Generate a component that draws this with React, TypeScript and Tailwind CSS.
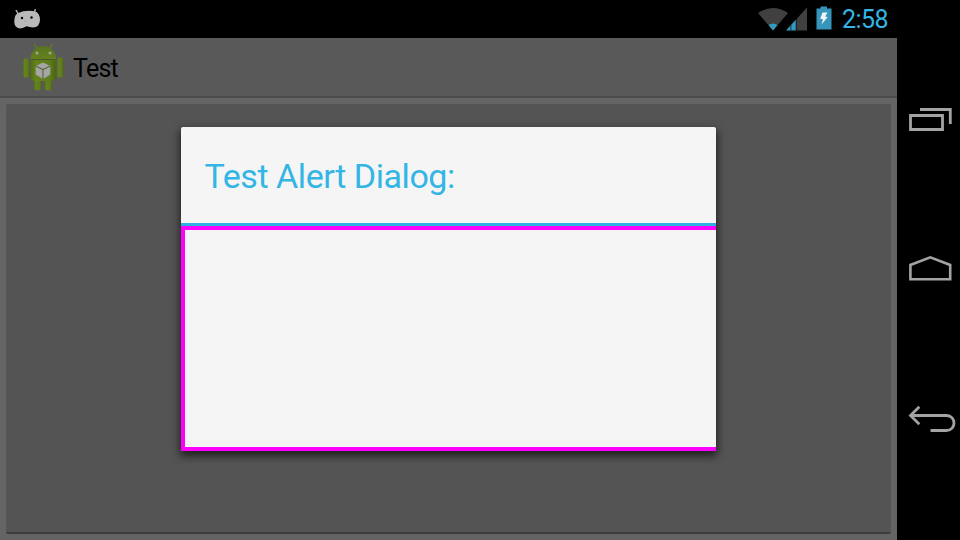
function AndroidHead() {
  return (
    <svg width="28" height="20" viewBox="0 0 28 20" fill="#b9b9b9">
      <path d="M2 1 L4.500 5.500" stroke="#b9b9b9" strokeWidth="1.400" />
      <path d="M21.500 0 L20 4" stroke="#b9b9b9" strokeWidth="1.400" />
      <path d="M3.500 4.200 Q12 0.500 21.500 2.500 Q26 4.500 26 11 Q25.500 18.500 19 18.500 Q15.500 18.300 12.500 17.300 Q8 20.300 4 19 Q0 17.500 0.300 12 Q0.500 6 3.500 4.200Z" />
      <circle cx="8" cy="9" r="1.200" fill="#000" />
      <circle cx="17.500" cy="8.500" r="1.200" fill="#000" />
      <circle cx="11.500" cy="12.500" r="0.500" fill="#888" />
    </svg>
  );
}

function AppIcon() {
  return (
    <svg width="41" height="48" viewBox="0 0 41 48">
      <defs>
        <linearGradient id="head" x1="0" y1="0" x2="0" y2="1">
          <stop offset="0" stopColor="#57731f" />
          <stop offset="1" stopColor="#64821d" />
        </linearGradient>
        <linearGradient id="body" x1="0" y1="0" x2="1" y2="0">
          <stop offset="0" stopColor="#506c14" />
          <stop offset="0.200" stopColor="#64831d" />
          <stop offset="0.750" stopColor="#5f7d1c" />
          <stop offset="1" stopColor="#4b6512" />
        </linearGradient>
      </defs>
      <path d="M11 0.800 L14 5.500 M29.500 0.800 L26.500 5.500" stroke="#5f7d20" strokeWidth="1.400" />
      <path d="M7.500 16 C8 -1.500 32.500 -1.500 33 16Z" fill="url(#head)" />
      <circle cx="14" cy="10" r="1.500" fill="#a0a690" />
      <circle cx="27" cy="10" r="1.500" fill="#a0a690" />
      <rect x="0" y="15.500" width="6.300" height="19" rx="2" fill="url(#body)" />
      <rect x="34" y="14.500" width="6.300" height="20" rx="2" fill="url(#body)" />
      <rect x="11" y="34" width="7.500" height="13.300" rx="2.500" fill="url(#body)" />
      <rect x="21.500" y="34" width="7.500" height="13.300" rx="2.500" fill="url(#body)" />
      <path d="M7.500 17H33V34Q33 38 29 38H11.500Q7.500 38 7.500 34Z" fill="url(#body)" />
      <path d="M9 16.500H31.500" stroke="#475b17" strokeWidth="0.800" />
      <path d="M20 19.500 L27.300 23 V31.500 L20 36 L12.700 31.500 V23Z" fill="#a6a6a6" />
      <path d="M12.700 23 L20 26.600 L27.300 23 M20 26.600V36" stroke="#5a6a3a" strokeWidth="1.200" fill="none" />
    </svg>
  );
}

function Wifi() {
  return (
    <svg width="30" height="24" viewBox="0 0 30 24">
      <path d="M0 6 Q15 -4 30 6 L15 23.500Z" fill="#404040" />
      <path d="M10.500 18 Q15 15 19.500 18 L15 23.500Z" fill="#339abf" />
    </svg>
  );
}

function Signal() {
  return (
    <svg width="22" height="24" viewBox="0 0 22 24">
      <path d="M10.500 12 L21 0.500V23.500H10.500Z" fill="#404040" />
      <path d="M0 23.500 L4.500 18.500V23.500Z M5.200 17.800 L9.800 12.800V23.500H5.200Z" fill="#339abf" />
      <path d="M4.800 18V23.500" stroke="#245f76" />
    </svg>
  );
}

function Battery() {
  return (
    <svg width="16" height="24" viewBox="0 0 16 24">
      <path d="M4.500 0.500H11V2.500H15.500V23.500H0.500V2.500H4.500Z" fill="#3795bb" />
      <path d="M6.500 6.500 L11.500 6.500 L9.200 10.500 L11.700 11 L5.500 18.500 L6.900 13.300 L4.200 12.800Z" fill="#edf5f8" />
    </svg>
  );
}

function StatusBar() {
  return (
    <header className="flex h-[37.500px] shrink-0 items-start bg-black">
      <div className="mt-[9px] ml-[14px]">
        <AndroidHead />
      </div>
      <div className="mt-[6.500px] ml-auto flex">
        <Wifi />
      </div>
      <div className="mt-[6.500px] mr-[8px] -ml-[2px] flex">
        <Signal />
      </div>
      <div className="mt-[6px] mr-[10px] flex">
        <Battery />
      </div>
      <span className="mt-[5px] mr-[9px] w-[46px] text-[25px] leading-[30px] tracking-[-0.550px] whitespace-nowrap text-[#33b5e5]">2:58</span>
    </header>
  );
}

function NavigationBar() {
  return (
    <nav className="flex w-[63px] shrink-0 flex-col items-end bg-black">
      <svg className="mt-[100px] shrink-0" width="60" height="40" viewBox="0 0 60 40" fill="none" stroke="#a3a3a3" strokeWidth="2.800">
        <path d="M10.500 15.500H42.500V29.500H10.500Z" />
        <path d="M20 9.500H50.300V24" />
      </svg>
      <svg className="mt-[105px] shrink-0" width="60" height="45" viewBox="0 0 60 45" fill="none" stroke="#a3a3a3" strokeWidth="2.600">
        <path d="M10.400 34.300V20L30.300 12.300L50.200 20V34.300Z" />
      </svg>
      <svg className="mt-[105px] shrink-0" width="60" height="45" viewBox="0 0 60 45" fill="none" stroke="#a3a3a3" strokeWidth="2.800">
        <path d="M10.500 20.500H46.500C56.500 20.500 56.500 35.500 46.500 35.500H30.500" />
        <path d="M19.300 11.800L10.500 20.500L19.300 29.200" />
      </svg>
    </nav>
  );
}

function AlertDialog() {
  return (
    <section
      role="dialog"
      className="absolute top-[126.500px] left-[180.500px] flex h-[324px] w-[535px] flex-col overflow-hidden rounded-t-[2px] bg-[#f5f5f5] shadow-[0_4px_9px_1px_rgba(0,0,0,0.65)]"
    >
      <h1 className="flex h-[96px] shrink-0 items-center pt-[4px] pl-[24px] text-[34px] tracking-[-0.440px] text-[#33b5e5]">Test Alert Dialog:</h1>
      <div className="h-[3px] shrink-0 bg-[#2eb0e2]" />
      <div className="flex-1 border-y-4 border-l-4 border-[#ff00ff]" />
    </section>
  );
}

export default function App() {
  return (
    <div className="relative flex h-[540px] w-[960px] overflow-hidden bg-black font-[Roboto,sans-serif]">
      <main className="flex min-w-0 flex-1 flex-col bg-[#646464]">
        <StatusBar />
        <div className="flex h-[60px] shrink-0 items-center border-b-2 border-[#4b4b4b] bg-[#595959] pl-[23px]">
          <AppIcon />
          <span className="ml-[9px] pt-[4px] text-[25px] tracking-[-0.750px] text-black">Test</span>
        </div>
        <div className="mx-[6px] mt-[6px] mb-[6px] flex-1 rounded-[2px] border-b-2 border-[#3c3c3c] bg-[#545454]" />
      </main>
      <NavigationBar />
      <AlertDialog />
    </div>
  );
}
